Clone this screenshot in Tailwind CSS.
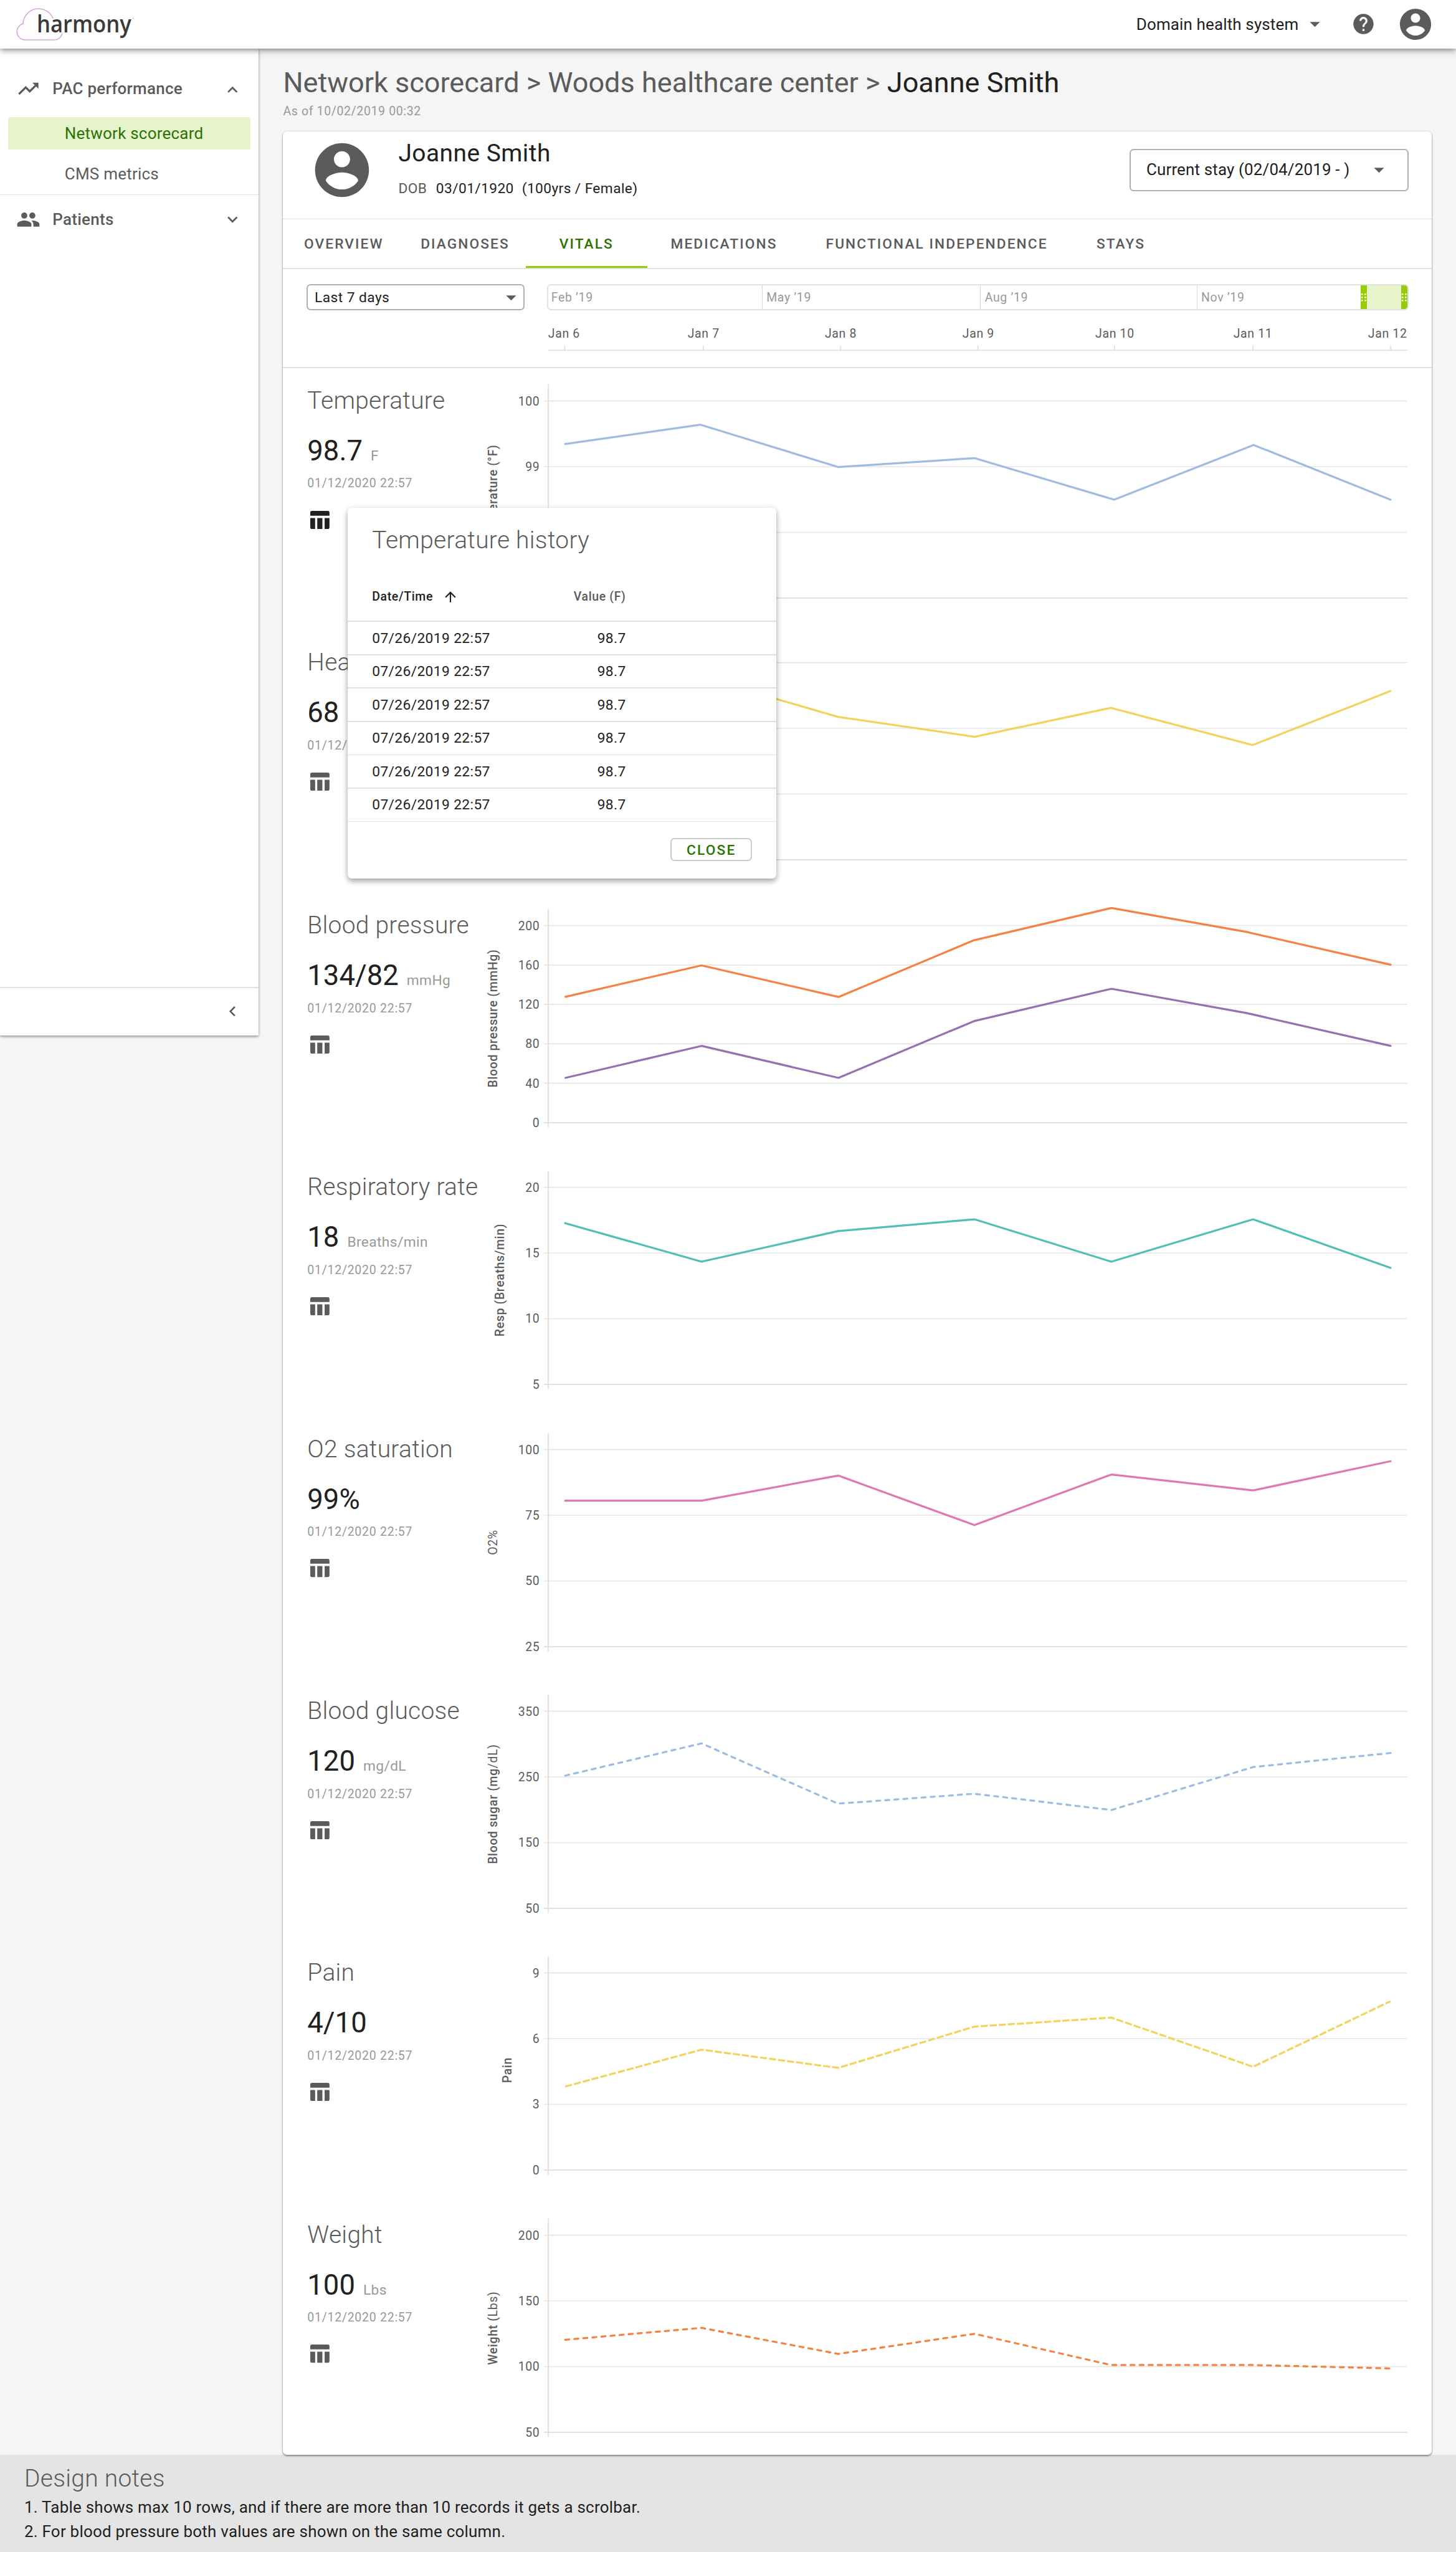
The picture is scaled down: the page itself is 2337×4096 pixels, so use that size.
<!DOCTYPE html>
<html lang="en" class="text-[25.9667px]">
<head>
<meta charset="utf-8">
<title>Harmony - Vitals</title>
<script src="https://cdn.jsdelivr.net/npm/@tailwindcss/browser@4"></script>
</head>
<body class="w-[90rem] h-[4096px] overflow-hidden bg-[#f5f5f5] font-[Roboto,sans-serif] text-[#212121] relative">

<header class="relative z-30 h-12 bg-white flex items-center shadow-[0_3px_6px_-1px_rgba(0,0,0,0.28),0_6px_9px_rgba(0,0,0,0.14),0_2px_16px_rgba(0,0,0,0.08)]">
  <svg class="w-36 h-12" viewBox="0 0 144 48" fill="none">
    <path d="M52.5 18.3A15.4 15.4 0 0 0 22.8 23.4A8.2 8.2 0 0 0 24.6 39.5H53.7A8.3 8.3 0 0 0 61.6 33.1" stroke="#d6a3e0" stroke-width=".95"/>
    <text x="36.3" y="31.9" textLength="93.6" lengthAdjust="spacingAndGlyphs" font-family="Open Sans" font-weight="600" font-size="23.4" fill="#3a3b36">harmony</text>
    <text x="131" y="19.2" font-family="Open Sans" font-size="2.2" fill="#888">™</text>
  </svg>
  <div class="ml-auto flex items-center pr-[1.33rem]">
    <span class="text-base leading-5 tracking-[0.15px]">Domain health system</span>
    <svg class="ml-1 size-6" viewBox="0 0 24 24" fill="#5b5b5b"><path d="M7 10l5 5 5-5z"/></svg>
    <svg class="ml-6 size-6" viewBox="0 0 24 24" fill="#5b5b5b"><path d="M12 2C6.48 2 2 6.48 2 12s4.48 10 10 10 10-4.48 10-10S17.52 2 12 2zm1 17h-2v-2h2v2zm2.07-7.75l-.9.92C13.45 12.9 13 13.5 13 15h-2v-.5c0-1.1.45-2.1 1.17-2.83l1.24-1.26c.37-.36.59-.86.59-1.41 0-1.1-.9-2-2-2s-2 .9-2 2H8c0-2.21 1.79-4 4-4s4 1.79 4 4c0 .88-.36 1.68-.93 2.25z"/></svg>
    <svg class="ml-[1.34rem] size-9.25" viewBox="0 0 24 24" fill="#5b5b5b"><path d="M12 2C6.48 2 2 6.48 2 12s4.48 10 10 10 10-4.48 10-10S17.52 2 12 2zm0 3c1.66 0 3 1.34 3 3s-1.34 3-3 3-3-1.34-3-3 1.34-3 3-3zm0 14.2c-2.5 0-4.71-1.28-6-3.22.03-1.99 4-3.08 6-3.08 1.99 0 5.97 1.09 6 3.08-1.29 1.94-3.5 3.22-6 3.22z"/></svg>
  </div>
</header>

<div class="relative z-20 flex h-595 items-start">
  <aside class="w-64 h-244 shrink-0 bg-white flex flex-col text-[#5b5b5b] shadow-[0_2px_4px_rgba(0,0,0,0.35),0_0_3px_rgba(0,0,0,0.15)]">
    <div class="pt-7 pl-4 pr-4 flex items-center">
      <svg class="size-6" viewBox="0 0 24 24" fill="currentColor"><path d="M16 6l2.29 2.29-4.88 4.88-4-4L2 16.59 3.41 18l6-6 4 4 6.3-6.29L22 12V6z"/></svg>
      <span class="ml-3 text-base leading-6 font-medium tracking-[0.27px]">PAC performance</span>
      <svg class="ml-auto size-5 mt-0.5" viewBox="0 0 24 24" fill="currentColor"><path d="M12 8l-6 6 1.41 1.41L12 10.83l4.59 4.58L18 14z"/></svg>
    </div>
    <div class="mt-4 mx-2 h-8 pl-14 rounded-xs bg-[#e6f3cb] text-[#2a7300] flex items-center"><span class="leading-5 tracking-[0.24px]">Network scorecard</span></div>
    <div class="mt-2 mx-2 h-8 pl-14 flex items-center"><span class="leading-5 tracking-[0.24px]">CMS metrics</span></div>
    <div class="mt-1 h-0.25 bg-[#e0e0e0]"></div>
    <div class="mt-3 pl-4 pr-4 flex items-center">
      <svg class="size-6" viewBox="0 0 24 24" fill="currentColor"><path d="M16 11c1.66 0 2.99-1.34 2.99-3S17.66 5 16 5c-1.66 0-3 1.34-3 3s1.34 3 3 3zm-8 0c1.66 0 2.99-1.34 2.99-3S9.66 5 8 5C6.34 5 5 6.34 5 8s1.34 3 3 3zm0 2c-2.33 0-7 1.17-7 3.5V19h14v-2.5c0-2.33-4.67-3.5-7-3.5zm8 0c-.29 0-.62.02-.97.05 1.16.84 1.97 1.97 1.97 3.45V19h6v-2.5c0-2.33-4.67-3.5-7-3.5z"/></svg>
      <span class="ml-3 leading-6 font-medium tracking-[0.27px]">Patients</span>
      <svg class="ml-auto size-5" viewBox="0 0 24 24" fill="currentColor"><path d="M16.59 8.59L12 13.17 7.41 8.59 6 10l6 6 6-6z"/></svg>
    </div>
    <div class="mt-auto h-0.25 bg-[#e0e0e0]"></div>
    <div class="h-11.75 pr-4 flex items-center justify-end">
      <svg class="size-5" viewBox="0 0 24 24" fill="currentColor"><path d="M15.41 7.41L14 6l-6 6 6 6 1.41-1.41L10.83 12z"/></svg>
    </div>
  </aside>

  <main class="flex-1 px-6 pt-3.5">
    <h1 class="text-[1.735rem] leading-10 text-[#5b5b5b] whitespace-nowrap"><span>Network scorecard &gt; Woods healthcare center &gt; </span><span class="text-[#212121]">Joanne Smith</span></h1>
    <p class="text-xs leading-4 tracking-[0.65px] text-[#999]">As of 10/02/2019 00:32</p>

    <section class="mt-3 h-574.5 w-284 bg-white rounded-sm flex flex-col shadow-[0_2px_3px_rgba(0,0,0,0.4),0_0_3px_rgba(0,0,0,0.16)]">
      <div class="h-21.5 shrink-0 flex items-start pl-6.5 pr-5.75">
        <svg class="mt-1.5 size-16" viewBox="0 0 24 24" fill="#5b5b5b"><path d="M12 2C6.48 2 2 6.48 2 12s4.48 10 10 10 10-4.48 10-10S17.52 2 12 2zm0 3c1.66 0 3 1.34 3 3s-1.34 3-3 3-3-1.34-3-3 1.34-3 3-3zm0 14.2c-2.5 0-4.71-1.28-6-3.22.03-1.99 4-3.08 6-3.08 1.99 0 5.97 1.09 6 3.08-1.29 1.94-3.5 3.22-6 3.22z"/></svg>
        <div class="ml-6 pt-1.5">
          <h2 class="text-2xl leading-8 tracking-[0.45px]">Joanne Smith</h2>
          <div class="mt-2.25 flex gap-2 text-sm leading-5 tracking-[0.4px]"><span class="text-[#5b5b5b] mr-0.25">DOB</span><span>03/01/1920</span><span>(100yrs / Female)</span></div>
        </div>
        <div class="ml-auto mt-4.25 w-69 h-10.5 rounded-sm border-2 border-[#b0b0b0] flex items-center justify-between pl-[0.97rem] pr-4">
          <span class="leading-5 tracking-[0.15px]">Current stay (02/04/2019 - )</span>
          <svg class="size-6" viewBox="0 0 24 24" fill="#5b5b5b"><path d="M7 10l5 5 5-5z"/></svg>
        </div>
      </div>
      <div class="h-0.25 shrink-0 bg-[#e0e0e0]"></div>
      <nav class="h-12 shrink-0 flex text-sm font-medium tracking-[2.07px] text-[#5b5b5b]">
        <div class="w-30 pt-0.25 flex items-center justify-center"><span>OVERVIEW</span></div>
        <div class="w-30 pt-0.25 flex items-center justify-center"><span>DIAGNOSES</span></div>
        <div class="w-30 pt-0.25 flex items-center justify-center text-[#2a7300] shadow-[inset_0_-3px_0_#97cc04]"><span>VITALS</span></div>
        <div class="w-38 pt-0.25 flex items-center justify-center"><span>MEDICATIONS</span></div>
        <div class="w-67 pt-0.25 pl-0.25 flex items-center justify-center"><span>FUNCTIONAL INDEPENDENCE</span></div>
        <div class="w-24 pt-0.25 pl-0.25 flex items-center justify-center"><span>STAYS</span></div>
      </nav>
      <div class="h-0.25 shrink-0 bg-[#e0e0e0]"></div>
      <div class="h-24.25 shrink-0 pt-3.75 pl-5.75 flex items-start">
        <div class="w-54 h-6.5 rounded-sm border-2 border-[#b0b0b0] flex items-center justify-between pl-1.75 pr-0">
          <span class="pt-0.25 text-sm leading-5 tracking-[0.45px]">Last 7 days</span>
          <svg class="size-6" viewBox="0 0 24 24" fill="#5b5b5b"><path d="M7 10l5 5 5-5z"/></svg>
        </div>
        <div class="ml-5.5 w-213">
          <div class="h-6.5 rounded-sm border-2 border-[#e2e2e2] flex overflow-hidden text-xs tracking-[0.65px] text-[#999]">
            <div class="w-[13.2rem] pl-0.75 pt-0.25 flex items-center"><span>Feb ’19</span></div>
            <div class="w-54 pl-1 pt-0.25 flex items-center border-l border-[#d8d8d8]"><span>May ’19</span></div>
            <div class="w-53.5 pl-1 pt-0.25 flex items-center border-l border-[#d8d8d8]"><span>Aug ’19</span></div>
            <div class="flex-1 pl-1 pt-0.25 flex items-center border-l border-[#d8d8d8]"><span>Nov ’19</span></div>
            <div class="w-1.5 bg-[#97cc04] flex items-center"><svg class="w-1.5 h-2.25" viewBox="0 0 6 9" fill="#fff"><circle cx="1.3" cy="1.4" r=".85"/><circle cx="4.6" cy="1.4" r=".85"/><circle cx="1.3" cy="4.5" r=".85"/><circle cx="4.6" cy="4.5" r=".85"/><circle cx="1.3" cy="7.6" r=".85"/><circle cx="4.6" cy="7.6" r=".85"/></svg></div>
            <div class="w-8.5 bg-[#e6f3cb]"></div>
            <div class="w-1.5 bg-[#97cc04] flex items-center"><svg class="w-1.5 h-2.25" viewBox="0 0 6 9" fill="#fff"><circle cx="1.3" cy="1.4" r=".85"/><circle cx="4.6" cy="1.4" r=".85"/><circle cx="1.3" cy="4.5" r=".85"/><circle cx="4.6" cy="4.5" r=".85"/><circle cx="1.3" cy="7.6" r=".85"/><circle cx="4.6" cy="7.6" r=".85"/></svg></div>
          </div>
          <svg class="w-213 h-12" viewBox="541 307 852 48" font-size="12" fill="#5b5b5b" text-anchor="middle" letter-spacing=".4">
            <text x="557.8" y="334.2">Jan 6</text><text x="695.8" y="334.2">Jan 7</text><text x="831.5" y="334.2">Jan 8</text><text x="967.6" y="334.2">Jan 9</text><text x="1102.6" y="334.2">Jan 10</text><text x="1239.2" y="334.2">Jan 11</text><text x="1372.4" y="334.2">Jan 12</text>
            <path d="M542 346.6H1391.8M558.5 342v4.6M695.4 342v4.6M831.3 342v4.6M967.2 342v4.6M1102.2 342v4.6M1239.2 342v4.6M1375.4 342v4.6" stroke="#dedede" fill="none"/>
          </svg>
        </div>
      </div>
      <div class="h-0.25 shrink-0 bg-[#e0e0e0]"></div>
      <div id="vitals" class="flex-1 min-h-0 overflow-hidden"></div>
    </section>
  </main>

  <div class="absolute left-86 top-113.5 w-106 h-91.75 bg-white rounded-sm shadow-[0_5px_8px_rgba(0,0,0,0.26),0_2px_12px_rgba(0,0,0,0.14)] flex flex-col">
    <h3 class="pt-4.25 pl-6 text-2xl leading-8 font-light tracking-[0.3px] text-[#5b5b5b]"><span>Temperature history</span></h3>
    <div class="mt-6.75 pt-0.25 h-6 pl-6 flex items-center text-xs font-medium tracking-[0.65px]">
      <span>Date/Time</span>
      <svg class="ml-2.25 size-4" viewBox="0 0 24 24" fill="currentColor"><path d="M4 12l1.41 1.41L11 7.83V20h2V7.83l5.58 5.59L20 12l-8-8-8 8z"/></svg>
      <span class="ml-auto mr-37.25 text-[#5b5b5b]">Value (F)</span>
    </div>
    <div class="mt-3 h-0.25 bg-[#e0e0e0]"></div>
    <div id="history" class="text-sm tracking-[0.4px]"></div>
    <div class="mt-4 mr-6 self-end w-20.25 h-5.75 pt-0.5 rounded-sm border-2 border-[#cbcbcb] flex items-center justify-center text-sm leading-5 font-medium tracking-[2.2px] text-[#2a7300]"><span>CLOSE</span></div>
  </div>
</div>

<footer class="relative z-10 h-24 bg-[#e4e4e4] pl-6 pt-2">
  <h3 class="text-2xl leading-8 font-light tracking-[0.3px] text-[#5b5b5b]"><span>Design notes</span></h3>
  <p class="leading-6 tracking-[0.24px]">1. Table shows max 10 rows, and if there are more than 10 records it gets a scrolbar.</p>
  <p class="leading-6 tracking-[0.24px]">2. For blood pressure both values are shown on the same column.</p>
</footer>

<script>
// Chart coordinates are relative to the top of each vital's row.
const X = [559, 693.9, 829, 963.8, 1099.2, 1239.4, 1375.3];
const vitals = [
  { name: 'Temperature', value: '98.7', unit: 'F', dark: true, axis: 'Temperature (°F)', ax: 492, ticks: ['100', '99', '98', '97'],
    lines: [{ c: '#9ebce0', x: [559, 692.9, 828.9, 963.8, 1102, 1239.9, 1375.2], y: [74.9, 55.9, 97.7, 88.9, 130, 75.9, 130] }] },
  { name: 'Heart rate', value: '68', unit: 'bpm', axis: 'Heart rate (bpm)', ax: 492, ticks: ['100', '80', '60', '40'],
    lines: [{ c: '#f2d35e', x: [559, 692.9, 828.9, 963.8, 1098.6, 1239, 1375], y: [70, 46.6, 86, 105.7, 77.1, 113.9, 60.5] }] },
  { name: 'Blood pressure', value: '134/82', unit: 'mmHg', axis: 'Blood pressure (mmHg)', ax: 492, ticks: ['200', '160', '120', '80', '40', '0'],
    lines: [{ c: '#f58142', x: [559.3, 693.8, 829.3, 963.4, 1099.3, 1233.4, 1375.3], y: [102.8, 71.8, 103, 46.9, 15, 38.8, 71.1] },
            { c: '#9670b0', x: [559.3, 693.8, 829.3, 963.4, 1099.3, 1233.4, 1375.3], y: [183, 151.4, 183, 126.9, 94.9, 119, 151.4] }] },
  { name: 'Respiratory rate', value: '18', unit: 'Breaths/min', axis: 'Resp (Breaths/min)', ax: 498.7, ticks: ['20', '15', '10', '5'],
    lines: [{ c: '#50bfb5', x: X, y: [67.9, 106, 75.7, 64.1, 106, 64.1, 112.1] }] },
  { name: 'O2 saturation', value: '99%', unit: '', axis: '', axisLight: 'O2%', ax: 492, ticks: ['100', '75', '50', '25'],
    lines: [{ c: '#df78b0', x: X, y: [83, 83, 58.1, 107.1, 57.1, 72.8, 43.9] }] },
  { name: 'Blood glucose', value: '120', unit: 'mg/dL', axis: 'Blood sugar (mg', axisLight: '/dL)', ax: 492, ticks: ['350', '250', '150', '50'],
    lines: [{ c: '#9ebce0', dash: '4 5', x: X, y: [96.1, 64.2, 123.8, 114, 130.1, 87.6, 73.7] }] },
  { name: 'Pain', value: '4/10', unit: '', axis: 'Pain', ax: 506, ay: 128.5, ticks: ['9', '6', '3', '0'],
    lines: [{ c: '#f2d35e', dash: '7 2', butt: true, x: X, y: [144.8, 108.3, 126.3, 85.5, 76.6, 125.2, 60.4] }] },
  { name: 'Weight', value: '100', unit: 'Lbs', axis: 'Weight (', axisLight: 'Lbs)', ax: 492, ticks: ['200', '150', '100', '50'],
    lines: [{ c: '#f58142', dash: '4 5', x: X, y: [135.8, 124, 149.8, 129.9, 160.8, 160.8, 164.1] }] },
];
document.getElementById('vitals').innerHTML = vitals.map((v, n) => {
  const step = 194.9 / (v.ticks.length - 1);
  const grid = v.ticks.map((t, i) => {
    const y = 32.4 + i * step, last = i === v.ticks.length - 1;
    return `<path d="M538 ${y}H1391.8" stroke="${last ? '#dcdcdc' : '#e5e5e5'}"/><text x="533.9" y="${y + 4.3}" text-anchor="end" fill="#5b5b5b">${t}</text>`;
  }).join('');
  const lines = v.lines.map(l => `<polyline fill="none" stroke="${l.c}" stroke-width="2" stroke-linejoin="round" stroke-linecap="${l.butt ? 'butt' : 'round'}" ${l.dash ? `stroke-dasharray="${l.dash}"` : ''} points="${l.x.map((x, i) => x + ',' + l.y[i]).join(' ')}"/>`).join('');
  return `<div class="${n === 1 ? 'h-65' : 'h-64.75'} flex">
    <div class="w-42 shrink-0 pl-6 pt-[1.04rem] whitespace-nowrap">
      <h3 class="text-2xl leading-8 font-light tracking-[0.29px] text-[#5b5b5b]"><span>${v.name}</span></h3>
      <div class="mt-[1.085rem] h-8 flex items-baseline gap-2 leading-8"><span class="text-[1.75rem] leading-8">${v.value}</span><span class="text-sm leading-8 tracking-[0.4px] text-[#999]">${v.unit}</span></div>
      <div class="mt-[0.53rem] text-xs leading-4 tracking-[0.75px] text-[#999]"><span>01/12/2020 22:57</span></div>
      <svg class="mt-[1.16rem] ml-[0.19rem] w-4.75 h-4.5" viewBox="0 0 19 18" fill="${v.dark ? '#212121' : '#5b5b5b'}"><path d="M1.6 0H17.4A1.6 1.6 0 0 1 19 1.6V4.8H0V1.6A1.6 1.6 0 0 1 1.6 0zM0 7.1H4.8V18H1.6A1.6 1.6 0 0 1 0 16.4zM6.9 7.1H12V18H6.9zM14.2 7.1H19V16.4A1.6 1.6 0 0 1 17.4 18H14.2z"/></svg>
    </div>
    <svg class="w-236 h-64.75 shrink-0" viewBox="448 0 944 259" font-size="12" letter-spacing=".4">
      ${grid}
      <path d="M542.3 16V232" stroke="#dcdcdc"/>
      <text transform="translate(${v.ax} ${v.ay || 124.2}) rotate(-90)" text-anchor="middle" fill="#5b5b5b" font-weight="500">${v.axis}<tspan font-weight="400">${v.axisLight || ''}</tspan></text>
      ${lines}
    </svg>
  </div>`;
}).join('');
document.getElementById('history').innerHTML = Array(6).fill(`<div class="h-8 pt-0.25 pl-6 flex items-center"><span>07/26/2019 22:57</span><span class="ml-auto mr-37.25">98.7</span></div><div class="h-0.25 bg-[#e0e0e0]"></div>`).join('');
</script>
</body>
</html>
